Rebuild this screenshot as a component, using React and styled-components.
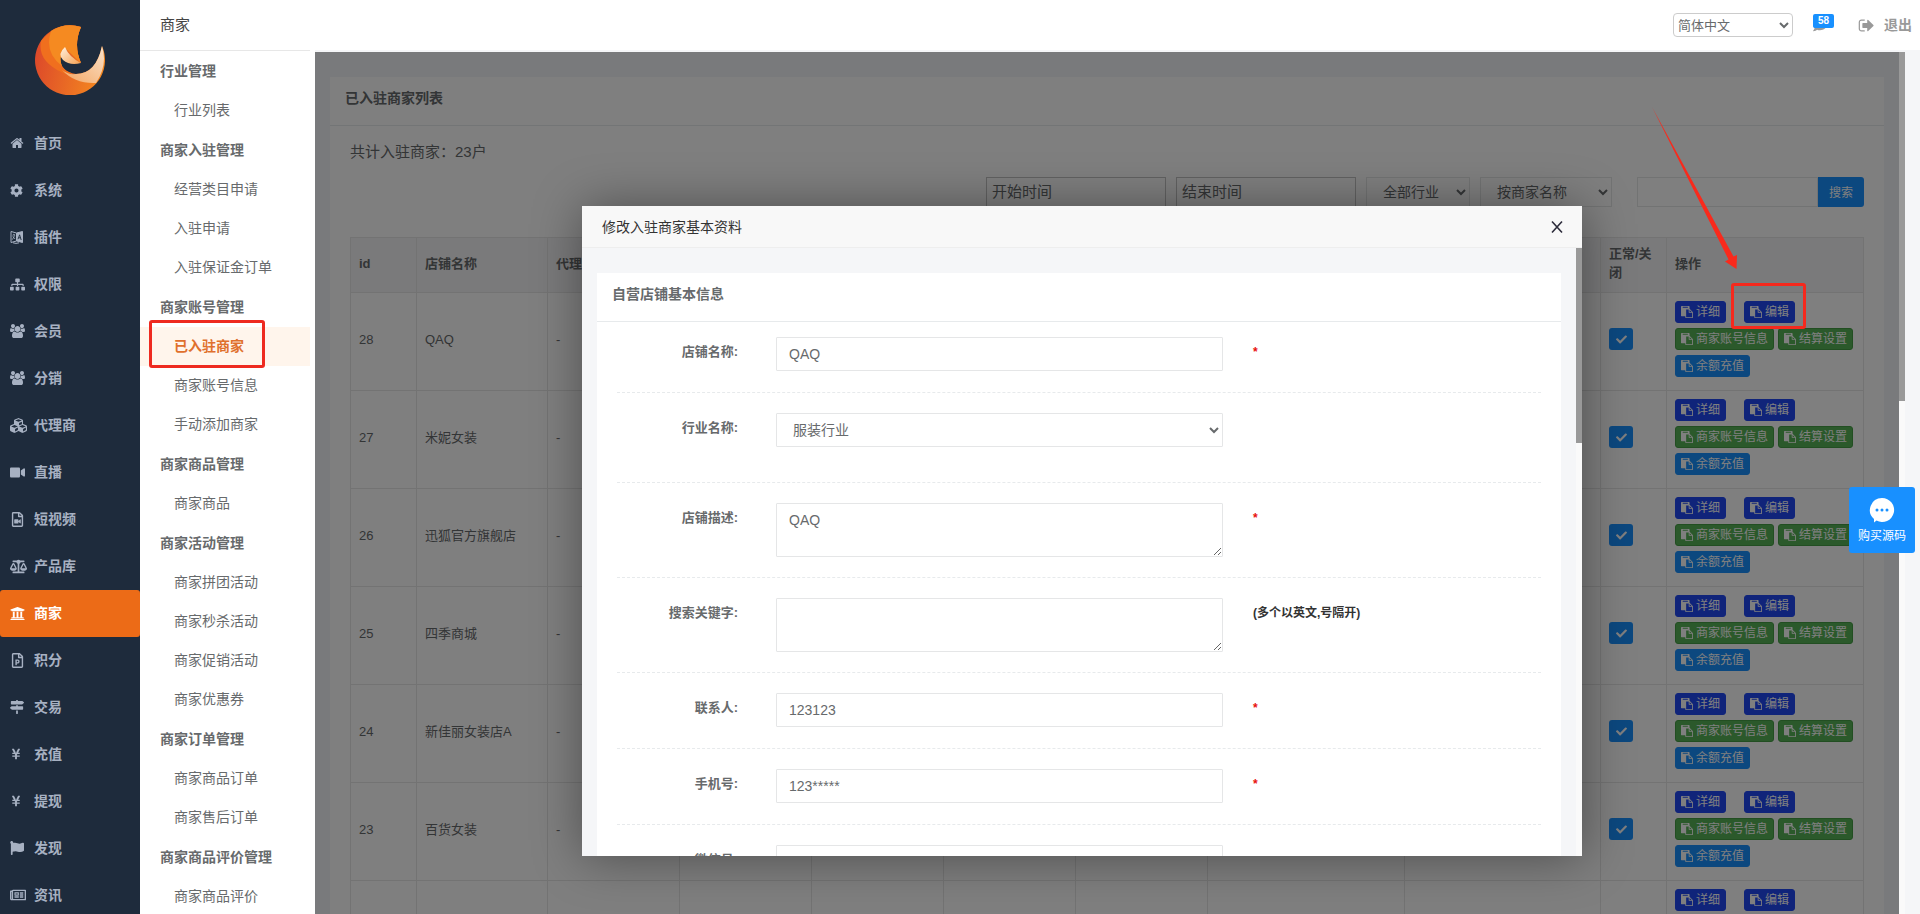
import React from "react";
import styled, { createGlobalStyle } from "styled-components";
import {
  FaCog,
  FaSitemap,
  FaCubes,
  FaVideo,
  FaRegFileVideo,
  FaBalanceScale,
  FaUniversity,
  FaRegFilePowerpoint,
  FaMapSigns,
  FaYenSign,
  FaFlag,
  FaRegNewspaper,
  FaCheck,
  FaComment,
} from "react-icons/fa";

const GlobalStyle = createGlobalStyle`
  * {
    box-sizing: border-box;
  }
  body {
    margin: 0;
    overflow: hidden;
    background: #fff;
    color: #676a6c;
    font-family: "Liberation Sans", "Noto Sans CJK SC", sans-serif;
    font-size: 14px;
    line-height: 20px;
  }
  button, input, select, textarea {
    font-family: inherit;
    color: inherit;
    margin: 0;
  }
  a {
    color: inherit;
    text-decoration: none;
  }
`;

const Shell = styled.div`
  display: flex;
  height: 100vh;
  overflow: hidden;
`;

/* Dark main navigation */
const SideNav = styled.nav`
  flex: 0 0 140px;
  background: #1e2b3c;
  overflow: hidden;
`;
SideNav.Logo = styled.div`
  height: 120px;
  padding: 25px 35px;
  line-height: 0;
`;
SideNav.Link = styled.a`
  display: flex;
  align-items: center;
  height: 47px;
  padding: 0 0 1px 10px;
  border-radius: 3px;
  font-weight: bold;
  color: ${(props) => (props.$active ? "#fff" : "#a7b1c2")};
  background: ${(props) => (props.$active ? "#ec6b17" : "transparent")};
`;
SideNav.Icon = styled.span`
  width: 24px;
  line-height: 0;
`;

const Right = styled.div`
  flex: 1;
  min-width: 0;
  display: flex;
  flex-direction: column;
`;

const TopBar = styled.header`
  flex: 0 0 50px;
  display: flex;
  align-items: center;
  padding: 0 8px 0 20px;
`;
TopBar.Title = styled.h1`
  flex: 1;
  margin: 0;
  font-size: 15px;
  font-weight: normal;
  color: #444;
`;
TopBar.Language = styled.select`
  width: 120px;
  height: 24px;
  border: 1px solid #ccc;
  border-radius: 4px;
  background: #fff;
  font-size: 13px;
`;
TopBar.Message = styled.a`
  position: relative;
  width: 21px;
  height: 18px;
  margin: 0 24px 0 20px;
  color: #999;
  line-height: 0;
  svg {
    margin: 2px 0 0 0;
  }
`;
TopBar.Badge = styled.span`
  position: absolute;
  top: -2px;
  left: 0;
  width: 21px;
  height: 14px;
  border-radius: 2px;
  background: #1890ff;
  color: #fff;
  font-size: 10px;
  font-weight: bold;
  line-height: 14px;
  text-align: center;
`;
TopBar.Logout = styled.a`
  display: flex;
  align-items: center;
  gap: 10px;
  color: #999;
  font-weight: bold;
`;

const Body = styled.div`
  flex: 1;
  min-height: 0;
  display: flex;
`;

const SubNav = styled.nav`
  flex: 0 0 170px;
  border-top: 1px solid #e7e7e7;
`;
SubNav.Heading = styled.h2`
  margin: 0;
  padding-left: 20px;
  font-size: 14px;
  font-weight: bold;
  line-height: 40px;
`;
SubNav.Link = styled.a`
  position: relative;
  display: block;
  padding-left: 34px;
  line-height: 39px;
  font-weight: ${(props) => (props.$active ? "bold" : "normal")};
  color: ${(props) => (props.$active ? "#e0702c" : "#676a6c")};
  background: ${(props) => (props.$active ? "#fff5ec" : "transparent")};
`;

const Workspace = styled.main`
  flex: 1;
  min-width: 0;
  display: flex;
  margin-left: 5px;
  padding-right: 15px;
  border-top: 2px solid #f5f6f8;
  background: #f5f6f8;
`;
const Frame = styled.div`
  position: relative;
  flex: 1;
  min-width: 0;
  overflow: hidden;
  padding: 25px 15px 0;
  background: #f3f5f9;
`;
const ScrollTrack = styled.div`
  flex: 0 0 6px;
  background: #fafafa;
`;
const ScrollThumb = styled.div`
  height: ${(props) => props.$length};
  background: #999;
`;

const Card = styled.section`
  background: #fff;
`;
Card.Title = styled.h3`
  margin: 0;
  padding: 11px 15px 17px;
  border-bottom: 1px solid #e7eaec;
  font-size: 14px;
  font-weight: bold;
`;
Card.Body = styled.div`
  padding: 16px 20px;
`;

const Total = styled.p`
  margin: 0 0 15px;
  font-size: 15px;
`;
const FilterBar = styled.form`
  display: flex;
  justify-content: flex-end;
  gap: 10px;
  margin-bottom: 30px;
`;
FilterBar.Date = styled.input`
  width: 180px;
  height: 30px;
  padding: 0 5px 2px;
  border: 1px solid #c4c4c4;
  background: #fff;
  font-size: 15px;
  &::placeholder {
    color: #676a6c;
    opacity: 1;
  }
`;
FilterBar.Select = styled.select`
  width: ${(props) => props.$width};
  height: 30px;
  padding: 0 0 0 12px;
  border: 1px solid #e5e6e7;
  background: #fff;
  font-size: 14px;
`;
FilterBar.Search = styled.div`
  display: flex;
  margin-left: 15px;
`;
FilterBar.Keyword = styled.input`
  width: 181px;
  height: 30px;
  border: 1px solid #e5e6e7;
  background: #fff;
`;
FilterBar.Submit = styled.button`
  width: 46px;
  height: 30px;
  padding: 0 0 2px;
  border: 0;
  border-radius: 0 3px 3px 0;
  background: #1990ff;
  color: #fff;
  font-size: 12px;
`;

const ShopTable = styled.table`
  width: 100%;
  table-layout: fixed;
  border-collapse: collapse;
  font-size: 13px;
  th,
  td {
    padding: 8px;
    border: 1px solid #e7e7e7;
    text-align: left;
    vertical-align: middle;
    line-height: 19px;
    overflow: hidden;
  }
  th {
    padding: 6px 8px 10px;
    background: #f5f5f6;
  }
`;
const TextCell = styled.td`
  && {
    padding-bottom: 12px;
  }
`;
const ColId = styled.col`
  width: 66px;
`;
const ColName = styled.col`
  width: 131px;
`;
const ColText = styled.col`
  width: 132px;
`;
const ColWide = styled.col`
  width: 197px;
`;

const Actions = styled.div`
  display: flex;
  flex-wrap: wrap;
  margin-right: -8px;
`;
const actionColors = {
  blue: ["#2049f5", "#2049f5"],
  green: ["#57b257", "#449d44"],
  sky: ["#1990ff", "#1990ff"],
};
const ActionButton = styled.button`
  display: flex;
  align-items: center;
  gap: 3px;
  height: 22px;
  margin: 0 ${(props) => (props.$spaced ? "18px" : "4px")} 5px 0;
  padding: 0 5px;
  border: 1px solid ${(props) => actionColors[props.$color][1]};
  border-radius: 3px;
  background: ${(props) => actionColors[props.$color][0]};
  color: #fff;
  font-size: 12px;
  line-height: 18px;
  white-space: nowrap;
`;
const StatusButton = styled.button`
  display: flex;
  align-items: center;
  justify-content: center;
  width: 24px;
  height: 22px;
  margin-bottom: 5px;
  padding: 0;
  border: 0;
  border-radius: 3px;
  background: #1990ff;
  color: #fff;
`;

/* Edit dialog */
const Mask = styled.div`
  position: absolute;
  inset: 0;
  display: flex;
  justify-content: center;
  padding: 154px 50px 58px 0;
  background: rgba(0, 0, 0, 0.5);
`;
const Dialog = styled.div`
  flex: 0 1 1000px;
  min-width: 0;
  display: flex;
  flex-direction: column;
  background: #fff;
  border-radius: 2px;
  box-shadow: 1px 1px 50px rgba(0, 0, 0, 0.4);
`;
Dialog.Header = styled.div`
  flex: 0 0 42px;
  display: flex;
  align-items: center;
  justify-content: space-between;
  padding: 0 18px 0 20px;
  border-bottom: 1px solid #eee;
  background: #f8f8f8;
  color: #333;
`;
Dialog.Close = styled.button`
  width: 14px;
  height: 14px;
  padding: 0;
  border: 0;
  background: none;
  line-height: 0;
`;
Dialog.Body = styled.div`
  flex: 1;
  min-height: 0;
  display: flex;
  background: #f5f6f8;
`;
Dialog.Content = styled.div`
  flex: 1;
  min-width: 0;
  overflow: hidden;
  padding: 25px 15px 0;
`;

const Form = styled.form`
  padding: 15px 20px 0;
`;
const FormRow = styled.div`
  display: flex;
  align-items: flex-start;
  min-height: ${(props) => (props.$tall ? "70px" : "56px")};
  margin-bottom: 20px;
  padding-bottom: 20px;
  border-bottom: 1px dashed #e7eaec;
`;
FormRow.Inner = styled.div`
  flex: 1;
  display: flex;
  align-items: flex-start;
  margin: 0 -15px;
`;
FormRow.Label = styled.label`
  flex: 0 0 16.6667%;
  padding: 5px 23px 0 15px;
  font-size: 13px;
  font-weight: bold;
  text-align: right;
`;
FormRow.Control = styled.div`
  flex: 0 0 50%;
  padding: 0 15px;
  line-height: 0;
`;
FormRow.Note = styled.span`
  padding: 5px 15px 0;
  font-size: 12px;
  font-weight: bold;
  color: ${(props) => (props.$required ? "#e81010" : "#333")};
`;
const TextInput = styled.input`
  width: 100%;
  height: 34px;
  padding: 0 12px;
  border: 1px solid #e5e6e7;
  border-radius: 1px;
  background: #fff;
  font-size: 14px;
`;
const SelectInput = styled(TextInput).attrs({ as: "select" })``;
const AreaInput = styled.textarea`
  width: 100%;
  height: 54px;
  padding: 6px 12px;
  border: 1px solid #e5e6e7;
  border-radius: 1px;
  background: #fff;
  font-size: 14px;
  line-height: 20px;
`;

const BuyButton = styled.button`
  position: fixed;
  top: 487px;
  right: 5px;
  display: flex;
  flex-direction: column;
  align-items: center;
  gap: 4px;
  width: 66px;
  height: 66px;
  padding: 10px 0 0;
  border: 0;
  border-radius: 3px;
  background: #1890ff;
  color: #fff;
  font-size: 12px;
  line-height: 18px;
`;

/* Red tutorial marks */
const MenuMark = styled.span`
  position: absolute;
  top: -7px;
  left: 9px;
  width: 116px;
  height: 48px;
  border: 3px solid #ee2a20;
  border-radius: 3px;
`;
const EditMark = styled.div`
  position: fixed;
  top: 283px;
  right: 114px;
  width: 75px;
  height: 46px;
  border: 3px solid #f5291d;
  border-radius: 3px;
`;
const Arrow = styled.svg`
  position: fixed;
  top: 107px;
  right: 180px;
`;

const glyphs = {
  home: [
    1792,
    "M1472 992v480q0 26-19 45t-45 19h-384v-384h-256v384h-384q-26 0-45-19t-19-45v-480q0-1 .5-3t.5-3l575-474 575 474q1 2 1 6zm223-69l-62 74q-8 9-21 11h-3q-13 0-21-7l-692-577-692 577q-12 8-24 7-13-2-21-11l-62-74q-8-10-7-23.5t11-21.5l719-599q32-26 76-26t76 26l244 204v-195q0-14 9-23t23-9h192q14 0 23 9t9 23v408l219 182q10 8 11 21.5t-7 23.5z",
  ],
  users: [
    1920,
    "M593 896q-162 5-265 128h-134q-82 0-138-40.5t-56-118.5q0-353 124-353 6 0 43.5 21t97.5 42.5 119 21.5q67 0 133-23-5 37-5 66 0 139 81 256zm1071 637q0 120-73 189.5t-194 69.5h-874q-121 0-194-69.5t-73-189.5q0-53 3.5-103.500t14-109 26.500-108.500 43-97.500 62-81 85.500-53.500 111.500-20q10 0 43 21.500t73 48 107 48 135 21.500 135-21.500 107-48 73-48 43-21.500q61 0 111.500 20t85.500 53.500 62 81 43 97.500 26.500 108.500 14 109 3.500 103.500zm-1024-1277q0 106-75 181t-181 75-181-75-75-181 75-181 181-75 181 75 75 181zm704 384q0 159-112.500 271.500t-271.500 112.500-271.500-112.500-112.500-271.500 112.500-271.500 271.500-112.500 271.500 112.500 112.500 271.500zm576 225q0 78-56 118.500t-138 40.500h-134q-103-123-265-128 81-117 81-256 0-29-5-66 66 23 133 23 59 0 119-21.500t97.500-42.500 43.500-21q124 0 124 353zm-128-609q0 106-75 181t-181 75-181-75-75-181 75-181 181-75 181 75 75 181z",
  ],
  paste: [
    1792,
    "M768 1664h896v-640h-416q-40 0-68-28t-28-68v-416h-384v1152zm256-1440v-64q0-13-9.5-22.5t-22.5-9.5h-704q-13 0-22.5 9.5t-9.5 22.5v64q0 13 9.5 22.5t22.5 9.5h704q13 0 22.5-9.5t9.5-22.5zm256 672h299l-299-299v299zm512 128v672q0 40-28 68t-68 28h-960q-40 0-68-28t-28-68v-160h-544q-40 0-68-28t-28-68v-1344q0-40 28-68t68-28h1088q40 0 68 28t28 68v328q21 13 36 28l408 408q28 28 48 76t20 88z",
  ],
  signOut: [
    1664,
    "M704 1440q0 4 1 20t.5 26.5-3 23.5-10 19.5-20.5 6.5h-320q-119 0-203.5-84.5t-84.5-203.5v-704q0-119 84.5-203.5t203.5-84.5h320q13 0 22.5 9.5t9.5 22.5q0 4 1 20t.5 26.5-3 23.5-10 19.5-20.5 6.5h-320q-66 0-113 47t-47 113v704q0 66 47 113t113 47h312l11.5 1 11.5 3 8 5.5 7 9 2 13.5zm928-544q0 26-19 45l-544 544q-19 19-45 19t-45-19-19-45v-288h-448q-26 0-45-19t-19-45v-384q0-26 19-45t45-19h448v-288q0-26 19-45t45-19 45 19l544 544q19 19 19 45z",
  ],
};

function Glyph({ name, size }) {
  const [width, path] = glyphs[name];
  return (
    <svg
      width={Math.round((size * width) / 1792)}
      height={size}
      viewBox={`0 0 ${width} 1792`}
      fill="currentColor"
      aria-hidden="true"
    >
      <path d={path} />
    </svg>
  );
}

function LanguageIcon() {
  return (
    <svg width="13" height="14" viewBox="0 0 13 14" fill="none" stroke="currentColor" aria-hidden="true">
      <path d="M1 1.5 6.5 3v8L1 12.5z" />
      <path d="M2.5 5.2 5 4.6M3.8 3.8v1M4.8 5.2 2.4 9.6M2.8 6.4 5 9" strokeWidth="0.8" />
      <path d="M6.5 3 12.5 1.5v11l-6-1.6z" fill="currentColor" />
      <path d="M8 9.2 9.6 4.8 11.2 10M8.6 7.8h2" stroke="#1e2b3c" strokeWidth="0.9" />
      <path d="M3 12.8q3 1.2 6 0" />
    </svg>
  );
}

function LogoMark() {
  return (
    <svg width="70" height="70" viewBox="0 0 70 70" aria-hidden="true">
      <defs>
        <linearGradient id="ring" x1="0" y1="0.5" x2="1" y2="0.7">
          <stop offset="0" stopColor="#dd4a2a" />
          <stop offset="1" stopColor="#f58a1f" />
        </linearGradient>
        <linearGradient id="tail" x1="0" y1="1" x2="1" y2="0">
          <stop offset="0" stopColor="#f3a561" />
          <stop offset="1" stopColor="#fbe3cb" />
        </linearGradient>
        <linearGradient id="beak" x1="0" y1="0" x2="1" y2="1">
          <stop offset="0" stopColor="#fff1e0" />
          <stop offset="1" stopColor="#f5a050" />
        </linearGradient>
      </defs>
      <path d="M46 2A35 35 0 1 0 67 21Q61 49 41 49Q24 46 25 31Q27 26 31 24Q32 33 46 38Q38 20 46 2Z" fill="url(#ring)" />
      <path d="M46 2Q24-5 6 16Q2 36 28 48Q31 50 36 48Q24 44 25 31Q27 26 31 24L46 38Q38 20 46 2Z" fill="#f06f1e" />
      <path d="M46 2Q30-3 16 6Q9 28 27 41Q23 30 31 24L46 38Q38 20 46 2Z" fill="#f58a21" />
      <path d="M67 21Q73 40 61 58Q40 59 27 45Q33 50 41 49Q61 49 67 21Z" fill="url(#tail)" />
      <path d="M30 22Q22 29 28 35Q35 41 46 38Q34 32 30 22Z" fill="url(#beak)" />
    </svg>
  );
}

const mainMenu = [
  ["首页", <Glyph name="home" size={14} />],
  ["系统", <FaCog size={13} />],
  ["插件", <LanguageIcon />],
  ["权限", <FaSitemap size={15} />],
  ["会员", <Glyph name="users" size={14} />],
  ["分销", <Glyph name="users" size={14} />],
  ["代理商", <FaCubes size={17} />],
  ["直播", <FaVideo size={15} />],
  ["短视频", <FaRegFileVideo size={15} />],
  ["产品库", <FaBalanceScale size={17} />],
  ["商家", <FaUniversity size={15} />],
  ["积分", <FaRegFilePowerpoint size={15} />],
  ["交易", <FaMapSigns size={14} />],
  ["充值", <FaYenSign size={12} />],
  ["提现", <FaYenSign size={12} />],
  ["发现", <FaFlag size={14} />],
  ["资讯", <FaRegNewspaper size={16} />],
];

const subMenu = [
  ["行业管理", ["行业列表"]],
  ["商家入驻管理", ["经营类目申请", "入驻申请", "入驻保证金订单"]],
  ["商家账号管理", ["已入驻商家", "商家账号信息", "手动添加商家"]],
  ["商家商品管理", ["商家商品"]],
  ["商家活动管理", ["商家拼团活动", "商家秒杀活动", "商家促销活动", "商家优惠券"]],
  ["商家订单管理", ["商家商品订单", "商家售后订单"]],
  ["商家商品评价管理", ["商家商品评价"]],
];

const shops = [
  [28, "QAQ"],
  [27, "米妮女装"],
  [26, "迅狐官方旗舰店"],
  [25, "四季商城"],
  [24, "新佳丽女装店A"],
  [23, "百货女装"],
  [22, ""],
];

function Action({ color, spaced, children }) {
  return (
    <ActionButton type="button" $color={color} $spaced={spaced}>
      <Glyph name="paste" size={12} />
      {children}
    </ActionButton>
  );
}

function ShopRow({ id, name }) {
  return (
    <tr>
      <TextCell>{id}</TextCell>
      <TextCell>{name}</TextCell>
      <TextCell>-</TextCell>
      <td />
      <td />
      <td />
      <td />
      <td />
      <td />
      <td>
        <StatusButton type="button" aria-label="正常">
          <FaCheck size={11} />
        </StatusButton>
      </td>
      <td>
        <Actions>
          <Action color="blue" spaced>
            详细
          </Action>
          <Action color="blue" spaced>
            编辑
          </Action>
          <Action color="green">商家账号信息</Action>
          <Action color="green">结算设置</Action>
          <Action color="sky">余额充值</Action>
        </Actions>
      </td>
    </tr>
  );
}

function ShopList() {
  return (
    <Card>
      <Card.Title>已入驻商家列表</Card.Title>
      <Card.Body>
        <Total>共计入驻商家：23户</Total>
        <FilterBar>
          <FilterBar.Date placeholder="开始时间" aria-label="开始时间" />
          <FilterBar.Date placeholder="结束时间" aria-label="结束时间" />
          <FilterBar.Select $width="104px" aria-label="行业">
            <option>全部行业</option>
          </FilterBar.Select>
          <FilterBar.Select $width="132px" aria-label="搜索方式">
            <option>按商家名称</option>
          </FilterBar.Select>
          <FilterBar.Search>
            <FilterBar.Keyword aria-label="关键字" />
            <FilterBar.Submit type="button">搜索</FilterBar.Submit>
          </FilterBar.Search>
        </FilterBar>
        <ShopTable>
          <colgroup>
            <ColId />
            <ColName />
            <ColText />
            <ColText />
            <ColText />
            <ColText />
            <ColText />
            <ColWide />
            <col />
            <ColId />
            <ColWide />
          </colgroup>
          <thead>
            <tr>
              <th>id</th>
              <th>店铺名称</th>
              <th>代理商</th>
              <th />
              <th />
              <th />
              <th />
              <th />
              <th />
              <th>正常/关闭</th>
              <th>操作</th>
            </tr>
          </thead>
          <tbody>
            {shops.map(([id, name]) => (
              <ShopRow key={id} id={id} name={name} />
            ))}
          </tbody>
        </ShopTable>
      </Card.Body>
    </Card>
  );
}

function Field({ id, label, note, required, tall, children }) {
  return (
    <FormRow $tall={tall}>
      <FormRow.Inner>
        <FormRow.Label htmlFor={id}>{label}:</FormRow.Label>
        <FormRow.Control>{children}</FormRow.Control>
        {required && <FormRow.Note $required>*</FormRow.Note>}
        {note && <FormRow.Note>{note}</FormRow.Note>}
      </FormRow.Inner>
    </FormRow>
  );
}

function EditDialog() {
  return (
    <Dialog role="dialog" aria-label="修改入驻商家基本资料">
      <Dialog.Header>
        修改入驻商家基本资料
        <Dialog.Close type="button" aria-label="关闭">
          <svg width="14" height="14" viewBox="0 0 14 14" stroke="#2d2c3b" strokeWidth="1.6">
            <path d="M2 1.5l10 11M12 1.5l-10 11" />
          </svg>
        </Dialog.Close>
      </Dialog.Header>
      <Dialog.Body>
        <Dialog.Content>
          <Card>
            <Card.Title>自营店铺基本信息</Card.Title>
            <Form>
              <Field id="name" label="店铺名称" required>
                <TextInput id="name" defaultValue="QAQ" />
              </Field>
              <Field id="industry" label="行业名称" tall>
                <SelectInput id="industry">
                  <option>服装行业</option>
                </SelectInput>
              </Field>
              <Field id="description" label="店铺描述" required>
                <AreaInput id="description" defaultValue="QAQ" />
              </Field>
              <Field id="keywords" label="搜索关键字" note="(多个以英文,号隔开)">
                <AreaInput id="keywords" />
              </Field>
              <Field id="contact" label="联系人" required>
                <TextInput id="contact" defaultValue="123123" />
              </Field>
              <Field id="phone" label="手机号" required>
                <TextInput id="phone" defaultValue="123*****" />
              </Field>
              <Field id="wechat" label="微信号">
                <TextInput id="wechat" />
              </Field>
            </Form>
          </Card>
        </Dialog.Content>
        <ScrollTrack>
          <ScrollThumb $length="195px" />
        </ScrollTrack>
      </Dialog.Body>
    </Dialog>
  );
}

export default function App() {
  return (
    <>
      <GlobalStyle />
      <Shell>
        <SideNav>
          <SideNav.Logo>
            <LogoMark />
          </SideNav.Logo>
          {mainMenu.map(([label, icon]) => (
            <SideNav.Link key={label} href="#" $active={label === "商家"}>
              <SideNav.Icon>{icon}</SideNav.Icon>
              {label}
            </SideNav.Link>
          ))}
        </SideNav>
        <Right>
          <TopBar>
            <TopBar.Title>商家</TopBar.Title>
            <TopBar.Language aria-label="语言">
              <option>简体中文</option>
            </TopBar.Language>
            <TopBar.Message href="#">
              <FaComment size={14} />
              <TopBar.Badge>58</TopBar.Badge>
            </TopBar.Message>
            <TopBar.Logout href="#">
              <Glyph name="signOut" size={17} />
              退出
            </TopBar.Logout>
          </TopBar>
          <Body>
            <SubNav>
              {subMenu.map(([heading, links]) => (
                <React.Fragment key={heading}>
                  <SubNav.Heading>{heading}</SubNav.Heading>
                  {links.map((link) => (
                    <SubNav.Link key={link} href="#" $active={link === "已入驻商家"}>
                      {link}
                      {link === "已入驻商家" && <MenuMark />}
                    </SubNav.Link>
                  ))}
                </React.Fragment>
              ))}
            </SubNav>
            <Workspace>
              <Frame>
                <ShopList />
                <Mask>
                  <EditDialog />
                </Mask>
              </Frame>
              <ScrollTrack>
                <ScrollThumb $length="349px" />
              </ScrollTrack>
            </Workspace>
          </Body>
        </Right>
      </Shell>
      <BuyButton type="button">
        <svg width="26" height="26" viewBox="0 0 26 26" aria-hidden="true">
          <path d="M13 1a12 12 0 1 1-5.500 22.600L5 25.500V22A12 12 0 0 1 13 1z" fill="#fff" />
          <g fill="#1890ff">
            <circle cx="8" cy="13" r="1.500" />
            <circle cx="13" cy="13" r="1.500" />
            <circle cx="18" cy="13" r="1.500" />
          </g>
        </svg>
        购买源码
      </BuyButton>
      <Arrow width="88" height="163" viewBox="0 0 88 163" aria-hidden="true">
        <path d="M0 0 81.500 149.500 85 148 84.500 162 73 154.500 76.500 152.500z" fill="#f92a1c" />
      </Arrow>
      <EditMark />
    </>
  );
}
